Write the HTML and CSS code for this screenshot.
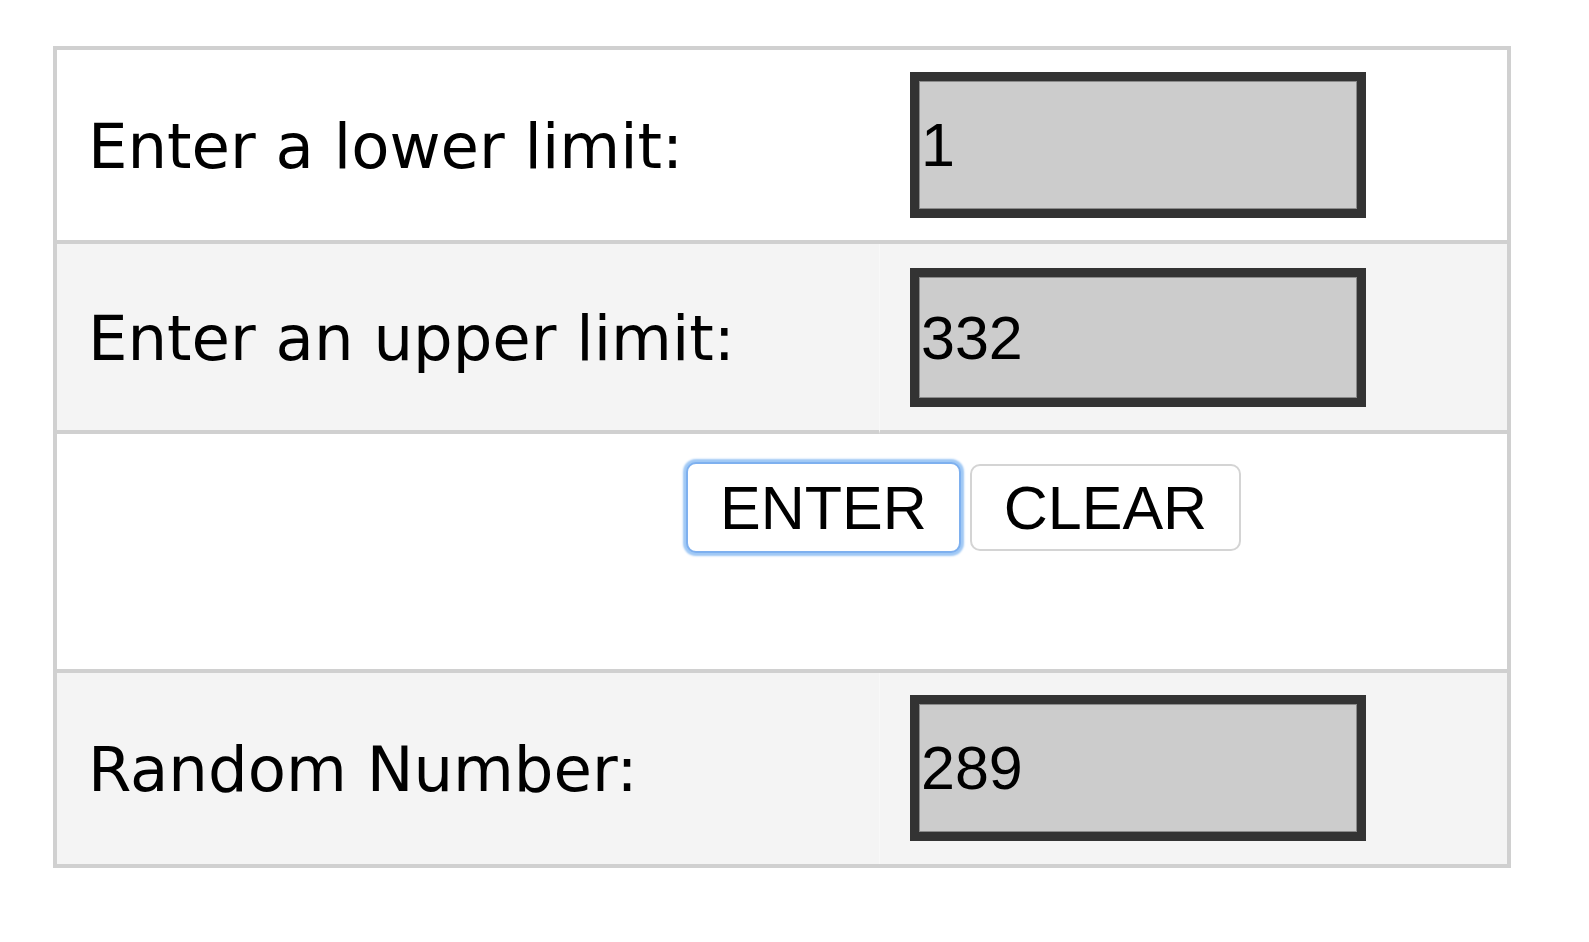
FILE: index.html
```html
<!DOCTYPE html>
<html lang="en">
<head>
  <meta charset="UTF-8">
  <title>Random Number</title>
  <link rel="stylesheet" href="styles.css">
</head>
<body>
  <table class="picker">
    <colgroup>
      <col class="col-label">
      <col class="col-field">
    </colgroup>
    <tr class="row-lower">
      <td class="label">Enter a lower limit:</td>
      <td class="field"><input type="text" value="1"></td>
    </tr>
    <tr class="row-upper striped">
      <td class="label">Enter an upper limit:</td>
      <td class="field"><input type="text" value="332"></td>
    </tr>
    <tr class="row-actions">
      <td class="actions" colspan="2">
        <button class="btn focused">ENTER</button>
        <button class="btn">CLEAR</button>
      </td>
    </tr>
    <tr class="row-result striped">
      <td class="label">Random Number:</td>
      <td class="field"><input type="text" value="289" readonly></td>
    </tr>
  </table>
</body>
</html>
```

FILE: styles.css
```css
html {
  box-sizing: border-box;
}
*, *:before, *:after {
  box-sizing: inherit;
}
body {
  margin: 0;
  padding: 46px 0 0 53px;
  background: #fff;
  color: #000;
}

.picker {
  width: 1458px;
  table-layout: fixed;
  border-collapse: separate;
  border-spacing: 0;
  border: 4px solid #d0d0d0;
}

.col-label {
  width: 822px;
}
.col-field {
  width: 628px;
}

.picker td {
  padding: 22px 31px;
  vertical-align: middle;
  border-bottom: 4px solid #d0d0d0;
}
.picker tr:last-child td {
  border-bottom: 0;
}

.row-upper td {
  padding-top: 24px;
  padding-bottom: 23px;
}
.row-result td {
  padding-top: 22px;
  padding-bottom: 23px;
}

.striped td {
  background: #f4f4f4;
}
.striped td.field {
  border-left: 1px solid #f8f8f8;
  padding-left: 30px;
}

.picker td.label {
  font-family: "DejaVu Sans", Verdana, sans-serif;
  font-size: 62.5px;
  padding-top: 24px;
  padding-bottom: 22px;
}

.field input {
  display: block;
  width: 456px;
  height: 146px;
  margin: 0;
  padding: 0 2px;
  border: 9px solid #333;
  box-shadow: inset 0 0 0 1px #8a8a8a;
  background: #ccc;
  font-family: "Liberation Sans", Arial, sans-serif;
  font-size: 61px;
  color: #000;
  outline: none;
}
.row-upper .field input {
  height: 139px;
}

.picker td.actions {
  height: 239px;
  vertical-align: top;
  padding: 30px 0 0 629px;
  background: #fff;
}

.btn {
  height: 87px;
  margin: 0 5px 0 0;
  padding: 0 32px;
  border: 2px solid #d4d4d4;
  border-radius: 10px;
  background: #fff;
  font-family: "Liberation Sans", Arial, sans-serif;
  font-size: 61px;
  color: #000;
  vertical-align: top;
}

.btn.focused {
  border-color: #7eb0ef;
  box-shadow: 0 0 2px 3px #9fc8f5;
  margin-top: -2px;
  height: 91px;
}
```
